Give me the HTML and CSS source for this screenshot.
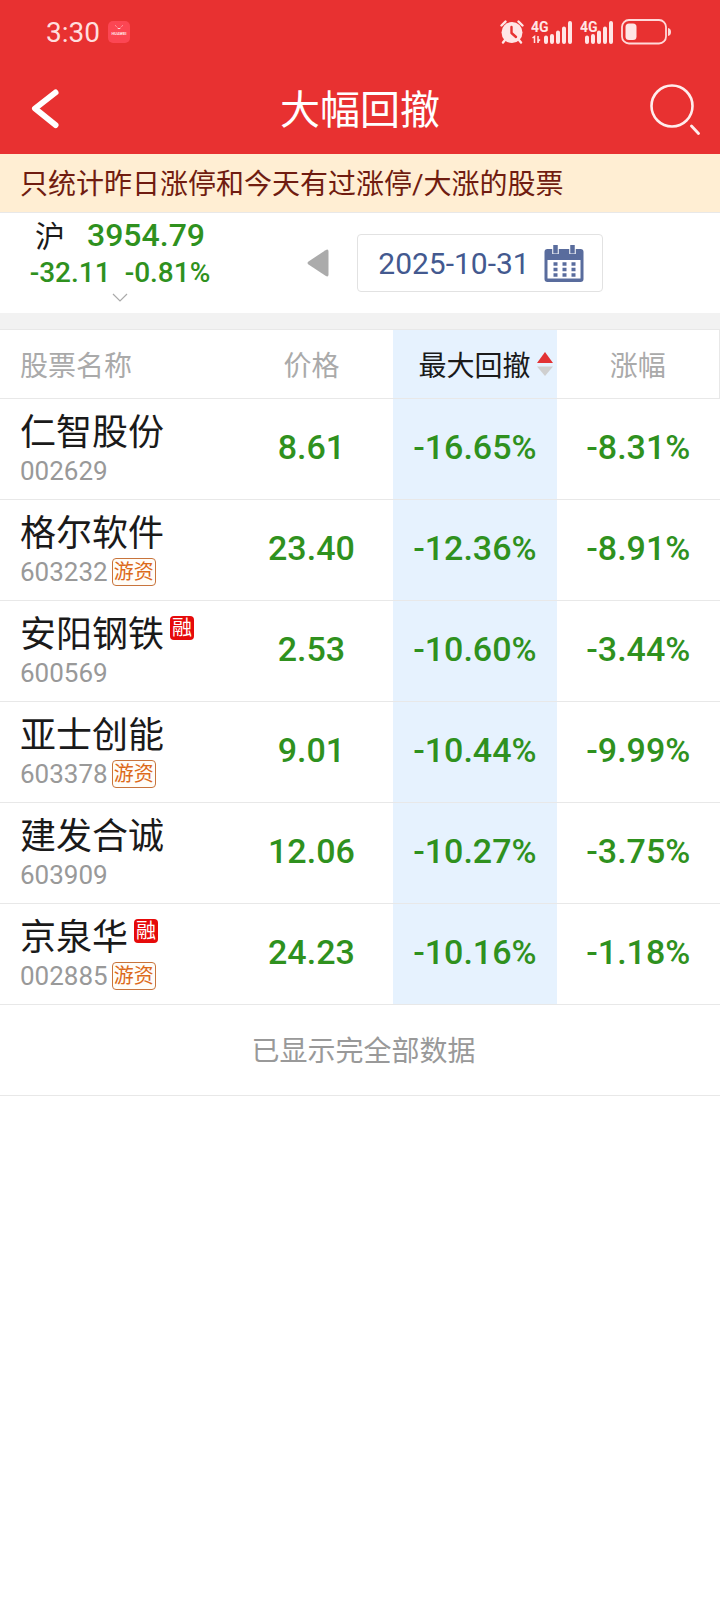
FILE: index.html
```html
<!DOCTYPE html>
<html lang="zh-CN">
<head>
<meta charset="utf-8">
<meta name="viewport" content="width=device-width, initial-scale=1">
<title>大幅回撤</title>
<link rel="stylesheet" href="styles.css">
</head>
<body>
<header class="top">
  <div class="status">
    <div class="status-group">
      <span class="clock">3:30</span>
      <svg class="app-mark" width="22" height="22" viewBox="0 0 22 22" aria-hidden="true">
        <rect width="22" height="22" rx="5" fill="#fc4653"/>
        <path d="M7.500 4.500l.8 1M14.500 4.500l-.8 1M9.500 7q1.500 1.500 3 0" fill="none" stroke="#ffd5d8" stroke-width="1"/>
        <text x="11" y="14" text-anchor="middle" font-size="4" font-weight="700" fill="#ffe3e5">HUAWEI</text>
      </svg>
    </div>
    <div class="status-group status-right">
      <svg width="24" height="24" viewBox="0 0 24 24" aria-hidden="true">
        <circle cx="12" cy="12.500" r="10.500" fill="#ffe6e6"/>
        <path d="M1.500 5.500L5.500 1.500M22.500 5.500L18.500 1.500M5 20l-2 2.500M19 20l2 2.500" stroke="#ffe6e6" stroke-width="2.400" stroke-linecap="round"/>
        <path d="M11.500 7v6l4.500 4" fill="none" stroke="#e83131" stroke-width="2.400" stroke-linecap="round" stroke-linejoin="round"/>
      </svg>
      <svg class="signal" width="42" height="24" viewBox="0 0 42 24" role="img" aria-label="4G">
        <text x="0" y="12" font-size="14" font-weight="700" fill="#ffe6e6">4G</text>
        <path d="M1.500 18l2-1.500V23M7 16v7M7 21.500l2-2" fill="none" stroke="#ffe6e6" stroke-width="1.500"/>
        <path d="M15 17.500V22M21 16v6M27 12.500V22M33 8.500V22M39 3v19" stroke="#ffe6e6" stroke-width="4" stroke-linecap="round"/>
      </svg>
      <svg class="signal" width="34" height="24" viewBox="0 0 34 24" role="img" aria-label="4G">
        <text x="0" y="12" font-size="14" font-weight="700" fill="#ffe6e6">4G</text>
        <path d="M7 17.500V22M13 16v6M19 12.500V22M25 8.500V22M31 3v19" stroke="#ffe6e6" stroke-width="4" stroke-linecap="round"/>
      </svg>
      <svg width="51" height="26" viewBox="0 0 51 26" role="img" aria-label="电量">
        <rect x="1" y="1" width="44" height="23.500" rx="7" fill="none" stroke="#ffd9d9" stroke-width="1.800"/>
        <rect x="4.500" y="4.500" width="11" height="16.500" rx="3.500" fill="#ffe6e6"/>
        <path d="M47 9q3 .5 3 4t-3 4z" fill="#ffd9d9"/>
      </svg>
    </div>
  </div>
  <nav class="nav">
    <button class="icon-btn back" aria-label="返回">
      <svg width="28" height="40" viewBox="0 0 28 40"><path d="M24.500 3.500L4 19.500 24.500 36" fill="none" stroke="#fff" stroke-width="6" stroke-linecap="round" stroke-linejoin="round"/></svg>
    </button>
    <h1 class="title">大幅回撤</h1>
    <button class="icon-btn search" aria-label="搜索">
      <svg width="50" height="51" viewBox="0 0 50 51"><circle cx="22" cy="22" r="20.500" fill="none" stroke="#ffeded" stroke-width="2.600"/><path d="M41.500 42l7 7.500" stroke="#ffeded" stroke-width="2.800" stroke-linecap="round"/></svg>
    </button>
  </nav>
</header>

<p class="notice">只统计昨日涨停和今天有过涨停/大涨的股票</p>

<section class="market">
  <button class="index">
    <span class="index-main"><span class="index-name">沪</span><span class="index-value">3954.79</span></span>
    <span class="index-change"><span>-32.11</span><span>-0.81%</span></span>
    <svg width="16" height="9" viewBox="0 0 16 9" aria-hidden="true"><path d="M1 1l7 7 7-7" fill="none" stroke="#aaa" stroke-width="1.200"/></svg>
  </button>
  <div class="date-area">
    <button class="icon-btn prev" aria-label="前一天">
      <svg width="22" height="28" viewBox="0 0 22 28"><path d="M18.500 1.200Q21.500-.500 21.500 2.500v23q0 3-3 1.300L1.500 15.500q-2-1.500 0-3z" fill="#ababab"/></svg>
    </button>
    <button class="date">
      <span>2025-10-31</span>
      <svg width="40" height="37" viewBox="0 0 40 37" aria-hidden="true">
        <rect x=".5" y="4" width="39" height="33" rx="3" fill="#596c9d"/>
        <rect x="3.500" y="15" width="33" height="18.500" fill="#fff"/>
        <path d="M11.500 0v9M28.500 0v9" stroke="#fff" stroke-width="6.500"/>
        <path d="M11.500 0v8.500M28.500 0v8.500" stroke="#596c9d" stroke-width="4.500"/>
        <path d="M9.500 19h22M9.500 24.500h22M9.500 30h22" stroke="#596c9d" stroke-width="3.400" stroke-dasharray="4 5"/>
      </svg>
    </button>
    <span class="date-end"></span>
  </div>
</section>

<main>
<table class="stocks">
  <colgroup><col><col class="col-num"><col class="col-num"><col class="col-num"></colgroup>
  <thead>
    <tr>
      <th class="name" scope="col">股票名称</th>
      <th scope="col">价格</th>
      <th class="hot" scope="col" aria-sort="ascending">
        <button class="sort">最大回撤
          <svg width="16" height="24" viewBox="0 0 16 24" aria-hidden="true"><path d="M8 0l8 11H0z" fill="#e23234"/><path d="M0 14.500h16L8 24z" fill="#cfcfcf"/></svg>
        </button>
      </th>
      <th class="last" scope="col">涨幅</th>
    </tr>
  </thead>
  <tbody>
    <tr><td class="name"><div class="stock">仁智股份</div><div class="code">002629</div></td><td>8.61</td><td class="hot">-16.65%</td><td>-8.31%</td></tr>
    <tr><td class="name"><div class="stock">格尔软件</div><div class="code">603232<span class="tag">游资</span></div></td><td>23.40</td><td class="hot">-12.36%</td><td>-8.91%</td></tr>
    <tr><td class="name"><div class="stock">安阳钢铁<span class="margin-tag">融</span></div><div class="code">600569</div></td><td>2.53</td><td class="hot">-10.60%</td><td>-3.44%</td></tr>
    <tr><td class="name"><div class="stock">亚士创能</div><div class="code">603378<span class="tag">游资</span></div></td><td>9.01</td><td class="hot">-10.44%</td><td>-9.99%</td></tr>
    <tr><td class="name"><div class="stock">建发合诚</div><div class="code">603909</div></td><td>12.06</td><td class="hot">-10.27%</td><td>-3.75%</td></tr>
    <tr><td class="name"><div class="stock">京泉华<span class="margin-tag">融</span></div><div class="code">002885<span class="tag">游资</span></div></td><td>24.23</td><td class="hot">-10.16%</td><td>-1.18%</td></tr>
  </tbody>
</table>
<p class="end">已显示完全部数据</p>
</main>
</body>
</html>
```
FILE: styles.css
```css
* { box-sizing: border-box; }

body {
  margin: 0;
  background: #fff;
  color: #1a1a1a;
  font-family: Roboto, "Noto Sans CJK SC", sans-serif;
  font-size: 28px;
}

button {
  margin: 0;
  padding: 0;
  border: 0;
  background: none;
  color: inherit;
  font: inherit;
  cursor: pointer;
}

svg { display: block; flex: none; }

.top { background: #e83131; color: #fff; }

.status {
  display: flex;
  justify-content: space-between;
  align-items: center;
  height: 64px;
  padding: 0 48px 0 46px;
}

.status-group { display: flex; align-items: center; gap: 8px; }
.status-right { gap: 7px; }
.clock { padding-top: 2px; color: #ffdede; line-height: 32px; }

.nav {
  display: grid;
  grid-template-columns: 100px 1fr 100px;
  align-items: center;
  height: 90px;
}

.icon-btn { display: flex; align-items: center; }
.back { padding-left: 31px; }
.search { justify-content: flex-end; padding-right: 20px; }
.title {
  margin: 0;
  padding-top: 4px;
  font-size: 40px;
  font-weight: 400;
  line-height: 56px;
  text-align: center;
}

.notice {
  margin: 0;
  padding: 11px 20px 7px;
  border-bottom: 1px solid #e8e8e8;
  background: #ffeed3;
  color: #701c10;
  line-height: 40px;
}

.market {
  display: grid;
  grid-template-columns: 1fr 2fr;
  height: 116px;
  border-bottom: 16px solid #f2f2f2;
}

.index {
  display: flex;
  flex-direction: column;
  align-items: center;
  padding-top: 2px;
}

.index-main { display: flex; align-items: center; gap: 22px; line-height: 40px; }
.index-name { padding-top: 4px; font-size: 30px; line-height: 36px; }
.index-value { color: #2f911e; font-size: 32px; font-weight: 500; }
.index-change {
  display: flex;
  gap: 14px;
  margin-bottom: 2px;
  color: #2f911e;
  font-weight: 500;
  line-height: 36px;
}

.date-area { display: flex; justify-content: center; align-items: center; }
.prev { width: 50px; }
.date-end { width: 50px; }
.date {
  display: flex;
  align-items: center;
  gap: 14px;
  height: 58px;
  padding: 0 18px 0 20px;
  border: 1px solid #e2e2e2;
  border-radius: 4px;
  color: #43598f;
  font-size: 30px;
}

.stocks {
  width: 100%;
  border-collapse: separate;
  border-spacing: 0;
  table-layout: fixed;
  border-top: 1px solid #e8e8e8;
}

.col-num { width: 22.7%; }

.stocks th {
  height: 69px;
  padding: 0;
  border-bottom: 1px solid #e8e8e8;
  color: #aaa;
  font-weight: 400;
}

.stocks td {
  height: 101px;
  padding: 0 0 4px;
  border-bottom: 1px solid #e8e8e8;
  color: #2f911e;
  font-size: 34px;
  font-weight: 500;
  text-align: center;
}

.stocks .name { padding: 0 0 0 20px; font-weight: 400; text-align: left; }
.stocks .hot { background: #e6f2fe; }
.stocks .last { border-right: 1px solid #e8e8e8; }

.sort {
  display: flex;
  justify-content: flex-end;
  align-items: center;
  gap: 6px;
  width: 100%;
  padding-right: 4px;
  color: #1a1a1a;
}

.stock {
  display: flex;
  align-items: flex-start;
  gap: 6px;
  padding-top: 4px;
  color: #1a1a1a;
  font-size: 36px;
  line-height: 44px;
}

.code {
  display: flex;
  align-items: center;
  gap: 4px;
  margin-bottom: 4px;
  color: #999;
  font-size: 26px;
  line-height: 32px;
}

.tag {
  padding: 0 1px;
  border: 1px solid #c8743c;
  border-radius: 4px;
  background: #fffdf8;
  color: #dc6a1a;
  font-size: 20px;
  line-height: 26px;
}

.margin-tag {
  width: 24px;
  height: 24px;
  margin-top: 3px;
  border-radius: 4px;
  background: #e60a0a;
  color: #fff;
  font-size: 20px;
  line-height: 24px;
  text-align: center;
}

.end {
  margin: 0;
  padding: 27px 20px 23px 27px;
  border-bottom: 1px solid #e8e8e8;
  color: #999;
  line-height: 40px;
  text-align: center;
}
```
